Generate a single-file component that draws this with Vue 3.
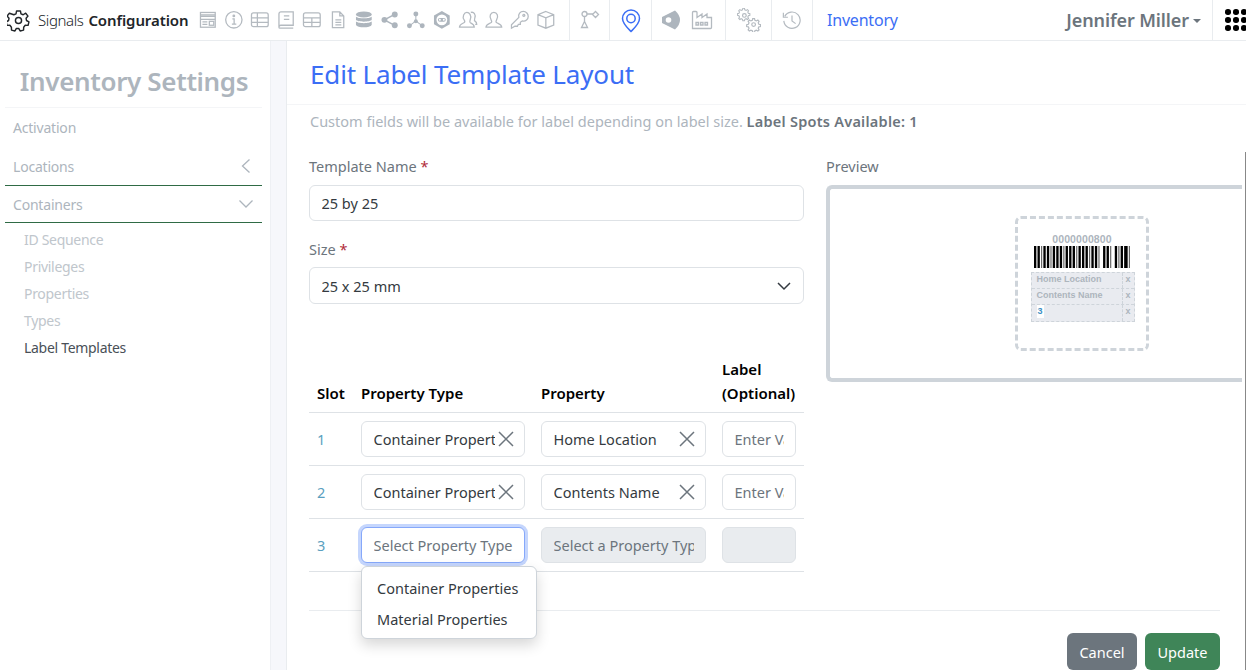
<template>
  <div class="page">
    <header class="topbar">
      <div class="brand">
        <svg class="gear" viewBox="0 0 24 24" fill="none" stroke="#212529" stroke-width="1.5" stroke-linejoin="round">
          <circle cx="12" cy="12" r="3.2" />
          <path d="M10 2h4l.6 3 2.3 1 2.6-1.6 2.4 3-2 2.2.4 2.4 2.6 1.4-.9 3.700-3-.1-1.600 2-.1 3-3.600.9-1.500-2.600h-2.400l-1.500 2.600-3.600-.9-.1-3-1.600-2-3 .1-.9-3.700 2.600-1.400.4-2.400-2-2.200 2.400-3L7.100 6l2.300-1z" />
        </svg>
        <span class="brand-light">Signals</span>
        <span class="brand-bold">Configuration</span>
      </div>

      <div class="icon-group first">
        <svg viewBox="0 0 20 20"><rect x="2.500" y="2.500" width="15" height="15" /><path d="M2.500 5h15M2.500 6.500h15M2.500 9.500h15M4.500 12h5M4.500 14.500h5" /><rect x="11.500" y="11.500" width="4.500" height="4" /></svg>
        <svg viewBox="0 0 20 20" class="wide"><circle cx="10" cy="10" r="8.300" /><path d="M8.500 9h1.800v5M8 14.300h4.500" /><circle cx="10" cy="6" r=".8" /></svg>
        <svg viewBox="0 0 20 20" class="wide"><rect x="1.500" y="3" width="17" height="14" rx="2" /><path d="M1.500 8h17M1.500 12.500h17M7.500 3v14" /></svg>
        <svg viewBox="0 0 20 20" class="wide"><path d="M5 2h12.500v13.500H5a2 2 0 0 0-2 2V4a2 2 0 0 1 2-2zM3 17.500a1 1 0 0 0 1 1h13.500M8 6h5.500M8 9.500h5.500" /></svg>
        <svg viewBox="0 0 20 20" class="wide"><rect x="1.500" y="3" width="17" height="14" rx="2" /><path d="M1.500 8h17M1.500 12.500h17M10 8v9" /></svg>
        <svg viewBox="0 0 20 20"><path d="M4.500 2h7.500l4 4v12h-11.500zM12 2v4h4M7.500 10h6M7.500 12.500h6M7.500 15h6" /></svg>
        <svg viewBox="0 0 20 20" class="solid"><ellipse cx="10" cy="4.500" rx="8" ry="3" /><path d="M2 6.500c1 2.500 15 2.500 16 0v3.500c-1 2.500-15 2.500-16 0zM2 11.500c1 2.500 15 2.500 16 0v3.500c-1 3.500-15 3.500-16 0z" /></svg>
        <svg viewBox="0 0 20 20" class="solid"><circle cx="15" cy="4.500" r="3" /><circle cx="4.500" cy="10" r="3" /><circle cx="15" cy="15.500" r="3" /><path d="M4 9.300l10.500-5.500.8 1.300-10.500 5.500zM4 10.700l10.500 5.500.8-1.300-10.500-5.500z" /></svg>
        <svg viewBox="0 0 20 20" class="solid"><circle cx="10" cy="4" r="2.500" /><circle cx="3.500" cy="16" r="2.500" /><circle cx="16.500" cy="16" r="2.500" /><circle cx="10" cy="11.500" r="2" /><path d="M9.500 5h1v6h-1zM3.500 15.500l6-4.500.6.800-6 4.500zM16.500 15.500l-6-4.500-.6.800 6 4.500z" /></svg>
        <svg viewBox="0 0 20 20" class="solid"><path d="M10 1l8 4.500v9L10 19l-8-4.500v-9z" /><circle cx="10" cy="10" r="5.500" fill="#fff" /><rect x="6" y="8" width="8" height="4" rx="2" /><circle cx="8" cy="10" r="1" fill="#fff" /><circle cx="12" cy="10" r="1" fill="#fff" /></svg>
        <svg viewBox="0 0 20 20"><path d="M1.500 17.500c0-3 2.500-3.500 4.500-4.500 1-.5 1-1.500.5-2.500-3-4 0-8 2.500-8s5 3 3.500 7c-.5 2-1 3 0 3.500 2 1 4 1.500 4 4.500zM13 2.500c3-1 5.500 2 4 6-.5 1.500-.5 2.500.5 3 1 .5 1.500 1.500 1.500 3h-1.500" /></svg>
        <svg viewBox="0 0 20 20"><path d="M2 17.500c0-3 3-3.500 5-4.500 1-.5 1-1.500.4-2.500C4.500 6 7 2.500 10 2.500s5.500 3.500 2.600 8c-.6 1-.6 2 .4 2.500 2 1 5 1.500 5 4.500z" /></svg>
        <svg viewBox="0 0 20 20"><path d="M1.500 18.500v-3.500l7.500-7.500c-1-3.500 1.500-6 4.500-6s5 2.500 5 5-2.500 5.500-6 4.500l-2 1.500v2h-2l-1 2h-2.500zM14 4.500a1 1 0 1 0 .1 0" /></svg>
        <svg viewBox="0 0 20 20"><path d="M10 1.500l8 3.200v10.600l-8 3.200-8-3.200V4.700zM2 4.700l8 3.300 8-3.300M10 8v10.500" /></svg>
      </div>

      <div class="icon-cell">
        <svg viewBox="0 0 20 20"><circle cx="4.500" cy="4" r="2.500" /><path d="M15.500 1.500l3 3-3 3-3-3zM7 4h5.500M4.500 6.500v5M1.500 17.500h6l-3-6z" /></svg>
      </div>
      <div class="icon-cell pin-cell">
        <svg class="pin" viewBox="0 0 20 24"><path d="M10 1.500a8.500 8.500 0 0 1 8.500 8.500c0 5-5 9.500-8.500 13C6.500 19.500 1.500 15 1.500 10A8.500 8.500 0 0 1 10 1.500z" /><circle cx="10" cy="10" r="4.200" /></svg>
      </div>
      <div class="icon-cell double">
        <svg class="shield" viewBox="0 0 18 20"><path class="fill" d="M0 7L13 .5Q18 5 18 10t-5 9.500L0 13z" /><circle cx="6.500" cy="10" r="2.800" fill="#fff" stroke="none" /></svg>
        <svg viewBox="0 0 22 20"><path d="M1.500 18.500V2.500q0-1 1-1h2.500q1 0 1 1v5l5-3.500v3.500l5-3.500v3.500h4.500v10q0 1-1 1zM5 12.500h2.500v2.500H5zM9.500 12.500H12v2.500H9.500zM14 12.500h2.500v2.500H14z" /></svg>
      </div>
      <div class="icon-cell medium">
        <svg viewBox="0 0 26 26"><circle cx="8" cy="8" r="2" /><path d="M7 1.500h2l.4 1.800 1.600.7 1.600-.9 1.300 1.300-.9 1.600.7 1.600 1.800.4v2l-1.800.4-.7 1.600.9 1.600-1.300 1.300-1.600-.9-1.600.7-.4 1.800H7l-.4-1.800-1.600-.7-1.600.9-1.300-1.300.9-1.600-.7-1.600-1.800-.4v-2l1.800-.4.7-1.600-.9-1.600L3.400 3.100l1.600.9 1.600-.7z" transform="translate(0 -1) scale(.9)" /><circle cx="18" cy="18" r="2" /><path d="M7 1.500h2l.4 1.800 1.600.7 1.600-.9 1.300 1.300-.9 1.600.7 1.600 1.800.4v2l-1.800.4-.7 1.600.9 1.600-1.300 1.300-1.600-.9-1.600.7-.4 1.800H7l-.4-1.800-1.600-.7-1.600.9-1.300-1.300.9-1.600-.7-1.600-1.800-.4v-2l1.800-.4.7-1.600-.9-1.600L3.400 3.100l1.600.9 1.600-.7z" transform="translate(10 10)" /></svg>
      </div>
      <div class="icon-cell last">
        <svg viewBox="0 0 22 22"><path d="M3 7a9 9 0 1 1-1 5M1.500 3v5h5M11 6v6l4 3" /></svg>
      </div>

      <a class="module">Inventory</a>
      <div class="user"><span>Jennifer Miller</span><i class="caret"></i></div>
      <div class="apps">
        <span v-for="n in 9" :key="n"></span>
      </div>
    </header>

    <div class="body">
      <aside class="sidebar">
        <h2 class="side-title">Inventory Settings</h2>
        <nav class="side-nav">
          <div class="side-item">Activation</div>
          <div class="side-item group">
            <span>Locations</span>
            <svg viewBox="0 0 12 16"><path d="M9.500 1.500L2.500 8l7 6.500" /></svg>
          </div>
          <div class="side-item group open">
            <span>Containers</span>
            <svg class="down" viewBox="0 0 16 12"><path d="M1.500 2.500L8 9l6.500-6.500" /></svg>
          </div>
          <div class="sub-list">
            <a v-for="item in subItems" :key="item" :class="{ active: item === 'Label Templates' }">{{ item }}</a>
          </div>
        </nav>
      </aside>

      <div class="gutter"></div>

      <main class="main">
        <h1 class="title">Edit Label Template Layout</h1>
        <div class="content">
          <p class="hint">
            Custom fields will be available for label depending on label size.
            <b>Label Spots Available: 1</b>
          </p>

          <div class="columns">
            <div class="form-col">
              <label class="field-label">Template Name <em>*</em></label>
              <input class="control" value="25 by 25" readonly />

              <label class="field-label size-label">Size <em>*</em></label>
              <div class="select-wrap">
                <input class="control" value="25 x 25 mm" readonly />
                <svg viewBox="0 0 14 14"><path d="M1 4l6 6 6-6" /></svg>
              </div>

              <table class="slots">
                <thead>
                  <tr>
                    <th class="c-slot">Slot</th>
                    <th class="c-type">Property Type</th>
                    <th class="c-prop">Property</th>
                    <th class="c-label">Label (Optional)</th>
                  </tr>
                </thead>
                <tbody>
                  <tr v-for="row in rows" :key="row.slot">
                    <td class="slot-no">{{ row.slot }}</td>
                    <td class="type-cell">
                      <div class="clearable" :class="{ focused: !row.type }">
                        <input class="control" :class="{ tight: row.type }" :value="row.type" placeholder="Select Property Type" readonly />
                        <svg v-if="row.type" viewBox="0 0 16 16"><path d="M1 1l14 14M15 1L1 15" /></svg>
                      </div>
                      <div v-if="!row.type" class="menu">
                        <div>Container Properties</div>
                        <div>Material Properties</div>
                      </div>
                    </td>
                    <td>
                      <div class="clearable">
                        <input class="control" :class="{ tight: row.prop, off: !row.prop }" :value="row.prop" placeholder="Select a Property Type" readonly />
                        <svg v-if="row.prop" viewBox="0 0 16 16"><path d="M1 1l14 14M15 1L1 15" /></svg>
                      </div>
                    </td>
                    <td>
                      <input class="control" :class="{ off: !row.prop }" :placeholder="row.prop ? 'Enter Value' : ''" readonly />
                    </td>
                  </tr>
                </tbody>
              </table>
            </div>

            <div class="preview-col">
              <div class="field-label">Preview</div>
              <div class="preview">
                <div class="sheet">
                  <div class="code">0000000800</div>
                  <svg class="barcode" :viewBox="`0 0 ${barsWidth} 22`" preserveAspectRatio="none">
                    <rect v-for="(b, i) in bars" :key="i" :x="b.x" y="0" :width="b.w" height="22" :fill="b.fill" />
                  </svg>
                  <div class="spots">
                    <div v-for="s in spots" :key="s" class="spot">
                      <span class="spot-text"><span :class="{ num: s === '3' }">{{ s }}</span></span>
                      <span class="spot-x">x</span>
                    </div>
                  </div>
                </div>
              </div>
            </div>
          </div>

          <footer class="actions">
            <button class="btn cancel">Cancel</button>
            <button class="btn update">Update</button>
          </footer>
        </div>
      </main>
    </div>
    <div class="edge"></div>
  </div>
</template>

<script setup>
const subItems = ["ID Sequence", "Privileges", "Properties", "Types", "Label Templates"];

const rows = [
  { slot: 1, type: "Container Properties", prop: "Home Location" },
  { slot: 2, type: "Container Properties", prop: "Contents Name" },
  { slot: 3, type: "", prop: "" },
];

const spots = ["Home Location", "Contents Name", "3"];

// barcode stripes: bar, gap, bar, gap... widths in px
const pattern = [2, 1, 2, 1, 1, 1, 2, 1, 2, 1, 1, 1, 2, 1, 2, 1, 2, 1, 1, 1, 2, 1, 2, 1, 2, 1, 1, 1, 2, 1, 2, 1, 2, 1, 1, 1, 2, 1, 2, 1, 1, 3, 2, 1, 2, 1, 1, 3, 2, 1, 1, 1, 2, 1, 3, 1, 1];
let cursor = 0;
const bars = [];
pattern.forEach((w, i) => {
  if (i % 2 === 0) bars.push({ x: cursor, w, fill: w === 1 ? "#666" : "#000" });
  cursor += w;
});
const barsWidth = cursor;
</script>

<style>
html,
body {
  margin: 0;
  background: #fff;
  overflow: hidden;
}
</style>

<style scoped>
.page {
  width: 1246px;
  height: 670px;
  overflow: hidden;
  position: relative;
  font-family: "Noto Sans", "Open Sans", sans-serif;
  font-size: 14px;
  color: #212529;
}

/* top bar */
.topbar {
  height: 40px;
  display: flex;
  align-items: stretch;
  border-bottom: 1px solid #e9ecef;
}
.brand {
  width: 194px;
  display: flex;
  align-items: center;
  padding-left: 7px;
  box-sizing: border-box;
  flex: none;
  font-size: 15px;
  white-space: nowrap;
}
.gear {
  width: 23px;
  height: 23px;
  margin-right: 8px;
  flex: none;
}
.brand-light {
  font-weight: 300;
  letter-spacing: -0.4px;
  margin-right: 5px;
}
.brand-bold {
  font-size: 15px;
  font-weight: 600;
  letter-spacing: -0.1px;
}
.icon-group {
  display: flex;
  align-items: center;
  width: 376px;
  flex: none;
  padding-left: 4px;
  box-sizing: border-box;
  gap: 6.300px;
  border-right: 1px solid #e9ecef;
}
.topbar svg {
  fill: none;
  stroke: #b4bac0;
  stroke-width: 1.300;
  flex: none;
}
.topbar .gear {
  stroke: #212529;
  stroke-width: 1.500;
}
.topbar svg.solid {
  fill: #adb5bd;
  stroke: none;
}
.icon-group svg {
  width: 19.700px;
  height: 19.700px;
}
.icon-cell {
  width: 40px;
  flex: none;
  box-sizing: border-box;
  display: flex;
  align-items: center;
  justify-content: center;
  border-right: 1px solid #e9ecef;
}
.icon-cell svg {
  width: 20px;
  height: 20px;
}
.icon-cell.pin-cell {
  width: 42px;
}
.icon-cell.double {
  width: 74px;
  justify-content: flex-start;
  padding-left: 10px;
  gap: 11px;
}
.icon-cell.double svg {
  width: 22px;
}
.icon-cell.double .shield {
  width: 18px;
  height: 20px;
  stroke: none;
}
.shield .fill {
  fill: #adb5bd;
}
.icon-cell.medium {
  width: 46px;
}
.icon-cell.medium svg {
  width: 24px;
  height: 24px;
}
.icon-cell.last {
  width: 41px;
}
.topbar .pin {
  width: 20px;
  height: 25px;
  stroke: #3b6ef5;
  stroke-width: 1.500;
}
.module {
  padding-left: 14px;
  line-height: 40px;
  font-size: 16px;
  color: #3b6ef5;
  letter-spacing: -0.2px;
}
.user {
  margin-left: auto;
  display: flex;
  align-items: center;
  font-size: 18px;
  font-weight: 600;
  color: #6c757d;
  padding-right: 11px;
  border-right: 1px solid #e9ecef;
  letter-spacing: -0.1px;
}
.caret {
  width: 0;
  height: 0;
  margin-left: 4px;
  margin-top: 2px;
  border: 4px solid transparent;
  border-top-color: #6c757d;
  border-bottom: 0;
}
.apps {
  width: 33px;
  flex: none;
  box-sizing: border-box;
  padding: 9px 0 0 12px;
  display: grid;
  grid-template-columns: repeat(3, 5px);
  grid-auto-rows: 5px;
  gap: 3px;
}
.apps span {
  width: 5.500px;
  height: 5.500px;
  border-radius: 50%;
  background: #000;
}

.body {
  display: flex;
  height: 629px;
}

/* sidebar */
.sidebar {
  width: 270px;
  flex: none;
  box-sizing: border-box;
  padding: 0 8px 0 5px;
}
.side-title {
  margin: 0;
  height: 67px;
  line-height: 80px;
  box-sizing: border-box;
  border-bottom: 1px solid #f4f5f7;
  text-align: center;
  font-size: 26px;
  font-weight: 600;
  color: #adb5bd;
  letter-spacing: -0.35px;
  padding-left: 1px;
  white-space: nowrap;
}
.side-item {
  height: 39px;
  display: flex;
  align-items: center;
  justify-content: space-between;
  padding: 0 8px;
  box-sizing: border-box;
  color: #adb5bd;
  letter-spacing: -0.2px;
}
.side-item.group {
  border-bottom: 1px solid #2f6b45;
}
.side-item.open {
  height: 37px;
}
.side-item svg {
  width: 12px;
  height: 16px;
  fill: none;
  stroke: #adb5bd;
  stroke-width: 1.300;
  margin-right: 2px;
}
.side-item svg.down {
  width: 16px;
  height: 12px;
  margin-right: 0;
}
.sub-list {
  display: flex;
  flex-direction: column;
  padding: 3px 0 0 19px;
}
.sub-list a {
  height: 27px;
  line-height: 27px;
  color: #c0c6cc;
  letter-spacing: -0.3px;
}
.sub-list a.active {
  color: #495057;
}

.gutter {
  width: 17px;
  flex: none;
  background: #f6f7fb;
  border-left: 1px solid #eef0f4;
  border-right: 1px solid #e9ecef;
  box-sizing: border-box;
}

/* main */
.main {
  flex: 1;
  min-width: 0;
}
.title {
  margin: 0;
  height: 64px;
  line-height: 66px;
  padding-left: 23px;
  box-sizing: border-box;
  font-size: 26px;
  font-weight: 400;
  color: #3b6ef5;
  letter-spacing: -0.15px;
  border-bottom: 1px solid #f4f5f7;
}
.content {
  padding: 0 0 0 22px;
  width: 934px;
  box-sizing: border-box;
  font-size: 14.500px;
}
.hint {
  margin: 0;
  height: 37px;
  line-height: 33px;
  padding-left: 1px;
  color: #adb5bd;
  white-space: nowrap;
}
.hint b {
  color: #6c757d;
  font-weight: 600;
  letter-spacing: 0.25px;
}
.columns {
  display: flex;
  gap: 22px;
  height: 468px;
  border-bottom: 1px solid #e9ecef;
  width: 911px;
}
.form-col {
  width: 495px;
  flex: none;
  padding-top: 14px;
}
.field-label {
  display: block;
  height: 20px;
  line-height: 20px;
  margin-bottom: 9px;
  color: #6c757d;
}
.field-label em {
  color: #b02a37;
  font-style: normal;
}
.size-label {
  margin-top: 18px;
  margin-bottom: 8px;
}
.control {
  display: block;
  width: 100%;
  height: 36px;
  box-sizing: border-box;
  padding: 0 11.500px;
  border: 1px solid #dee2e6;
  border-radius: 6px;
  outline: none;
  background: #fff;
  font: inherit;
  color: #343a40;
}
.control::placeholder {
  color: #6c757d;
  opacity: 1;
}
.control.off {
  background: #e9ecef;
}
.control.tight {
  padding-right: 29px;
}
.select-wrap {
  position: relative;
}
.select-wrap .control {
  height: 37px;
}
.select-wrap svg {
  position: absolute;
  right: 13px;
  top: 12px;
  width: 14px;
  height: 14px;
  fill: none;
  stroke: #343a40;
  stroke-width: 1.500;
}

/* slot table */
.slots {
  width: 495px;
  margin-top: 53px;
  border-collapse: collapse;
  table-layout: fixed;
}
.slots th {
  height: 52px;
  box-sizing: border-box;
  padding: 0 8px 7px;
  vertical-align: bottom;
  text-align: left;
  font-size: 15px;
  font-weight: 600;
  color: #000;
  line-height: 24px;
  border-bottom: 1px solid #dee2e6;
}
.c-slot {
  width: 44px;
}
.c-type {
  width: 180px;
}
.c-prop {
  width: 181px;
}
.slots td {
  height: 53px;
  box-sizing: border-box;
  padding: 0 8px;
  border-bottom: 1px solid #dee2e6;
}
.slot-no {
  color: #5a9fc0;
}
.type-cell {
  position: relative;
}
.clearable {
  position: relative;
  border-radius: 6px;
}
.clearable svg {
  position: absolute;
  right: 11px;
  top: 10px;
  width: 16px;
  height: 16px;
  fill: none;
  stroke: #6c757d;
  stroke-width: 1.500;
}
.clearable.focused .control {
  border-color: #86a8fa;
  box-shadow: 0 0 0 3px #c5d6fd;
}
.menu {
  position: absolute;
  left: 8px;
  top: 47px;
  z-index: 3;
  width: 176px;
  height: 73px;
  box-sizing: border-box;
  padding: 6px 0;
  background: #fff;
  border: 1px solid #ced4da;
  border-radius: 6px;
  box-shadow: 0 6px 14px rgba(0, 0, 0, 0.16);
}
.menu div {
  height: 31px;
  line-height: 31px;
  padding-left: 15px;
  color: #343a40;
}

/* preview */
.preview-col {
  flex: 1;
  min-width: 0;
  padding-top: 14px;
}
.preview {
  width: 416px;
  height: 197px;
  box-sizing: border-box;
  border: 4px solid #ced4da;
  border-right-width: 0;
  border-radius: 6px 0 0 6px;
  padding-top: 27px;
  padding-left: 185px;
}
.sheet {
  width: 134px;
  height: 135px;
  box-sizing: border-box;
  border: 3px dashed #ced4da;
  border-radius: 6px;
  padding-top: 14px;
  display: flex;
  flex-direction: column;
  align-items: center;
}
.code {
  font-family: "Liberation Sans", Arial, sans-serif;
  font-size: 10.500px;
  font-weight: 700;
  line-height: 12px;
  color: #adb5bd;
  letter-spacing: 0.1px;
}
.barcode {
  display: block;
  width: 96px;
  height: 22px;
  margin-top: 1px;
}
.spots {
  width: 104px;
  margin-top: 4px;
  margin-left: 1px;
  background: #e9ebf0;
  border: 1px dashed #ced4da;
  box-sizing: border-box;
}
.spot {
  height: 16px;
  box-sizing: border-box;
  display: flex;
  font-family: "Liberation Sans", Arial, sans-serif;
  font-size: 9px;
  font-weight: 700;
  line-height: 13px;
  color: #adb5bd;
  border-bottom: 1px dashed #ced4da;
}
.spot:last-child {
  border-bottom: 0;
}
.spot-text {
  flex: 1;
  padding-left: 5px;
  border-right: 1px dashed #ced4da;
}
.spot-text .num {
  display: inline-block;
  padding: 0 1px;
  background: #fff;
  color: #3d8fc4;
}
.spot-x {
  width: 11px;
  text-align: center;
}

/* buttons */
.actions {
  width: 911px;
  display: flex;
  justify-content: flex-end;
  gap: 8px;
  padding-top: 22px;
}
.btn {
  height: 37px;
  box-sizing: border-box;
  border: 0;
  border-radius: 6px;
  padding: 0;
  color: #fff;
  font: inherit;
}
.cancel {
  width: 70px;
  background: #6c757d;
}
.update {
  width: 75px;
  background: #3f8558;
}
.edge {
  position: absolute;
  right: 0;
  top: 152px;
  bottom: 0;
  width: 1px;
  background: #888;
}
</style>
